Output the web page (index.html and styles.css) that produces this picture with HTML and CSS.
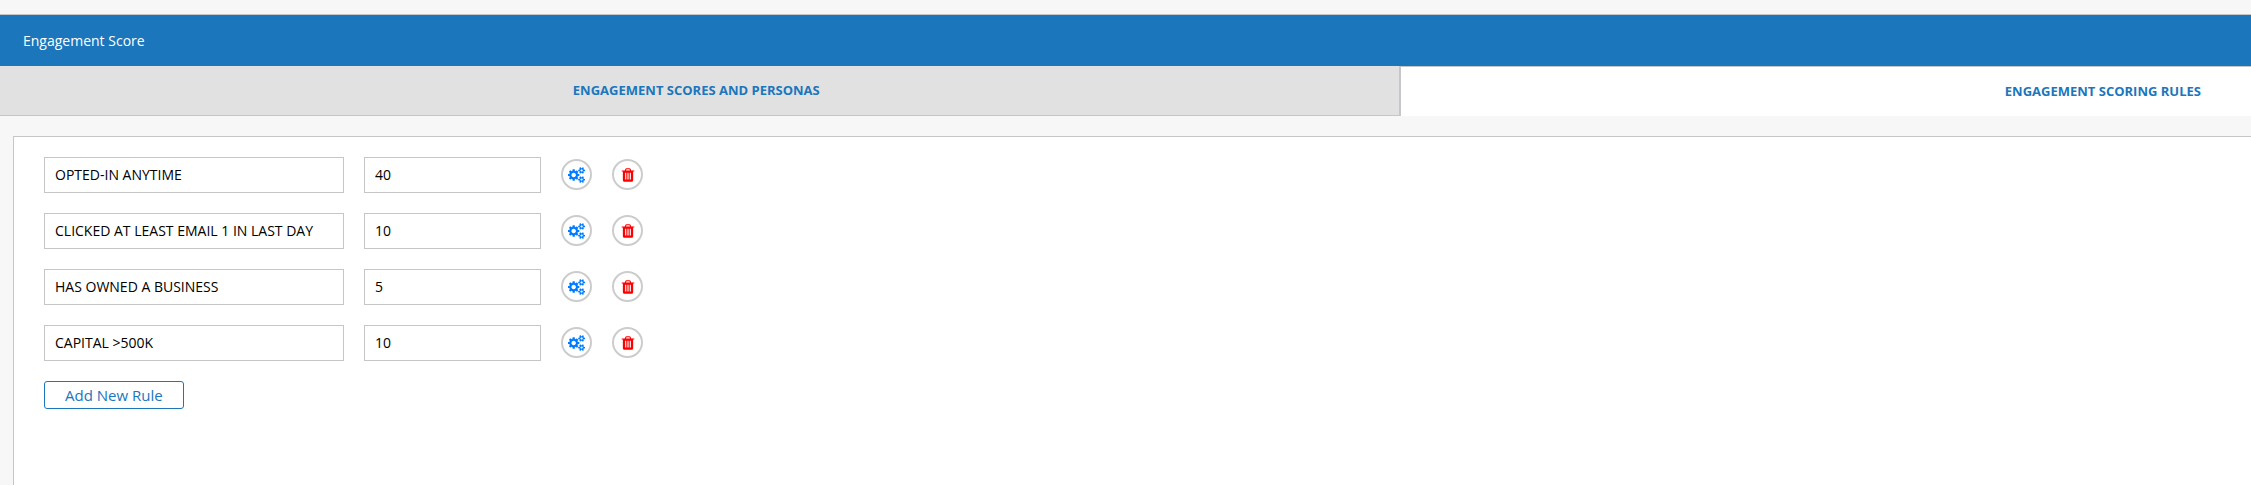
FILE: index.html
```
<!DOCTYPE html>
<html lang="en">
<head>
<meta charset="UTF-8">
<meta name="viewport" content="width=device-width, initial-scale=1.0">
<title>Engagement Score</title>
<link rel="stylesheet" href="styles.css">
</head>
<body>

<!-- Shared icons -->
<svg class="icon-defs" aria-hidden="true">
    <symbol id="icon-cogs" viewBox="0 0 1920 1792">
        <path d="M896 896q0-106-75-181t-181-75-181 75-75 181 75 181 181 75 181-75 75-181zm768 512q0-52-38-90t-90-38-90 38-38 90q0 53 37.500 90.500t90.500 37.500 90.500-37.500 37.500-90.500zm0-1024q0-52-38-90t-90-38-90 38-38 90q0 53 37.500 90.500t90.500 37.500 90.500-37.500 37.500-90.500zm-384 421v185q0 10-7 19.500t-16 10.500l-155 24q-11 35-32 76 34 48 90 115 7 11 7 20 0 12-7 19-23 30-82.500 89.500t-78.500 59.500q-11 0-21-7l-115-90q-37 19-77 31-11 108-23 155-7 24-30 24h-186q-11 0-20-7.500t-10-17.500l-23-153q-34-10-75-31l-118 89q-7 7-20 7-11 0-21-8-144-133-144-160 0-9 7-19 10-14 41-53t47-61q-23-44-35-82l-152-24q-10-1-17-9.500t-7-19.500v-185q0-10 7-19.500t16-10.500l155-24q11-35 32-76-34-48-90-115-7-11-7-20 0-12 7-20 22-30 82-89t79-59q11 0 21 7l115 90q34-18 77-32 11-108 23-154 7-24 30-24h186q11 0 20 7.500t10 17.500l23 153q34 10 75 31l118-89q8-7 20-7 11 0 21 8 144 133 144 160 0 8-7 19-12 16-42 54t-45 60q23 48 34 82l152 23q10 2 17 10.500t7 19.500zm640 533v140q0 16-149 31-12 27-30 52 51 113 51 138 0 4-4 7-122 71-124 71-8 0-46-47t-52-68q-20 2-30 2t-30-2q-14 21-52 68t-46 47q-2 0-124-71-4-3-4-7 0-25 51-138-18-25-30-52-149-15-149-31v-140q0-16 149-31 13-29 30-52-51-113-51-138 0-4 4-7 4-2 35-20t59-34 30-16q8 0 46 46.500t52 67.500q20-2 30-2t30 2q51-71 92-112l6-2q4 0 124 70 4 3 4 7 0 25-51 138 17 23 30 52 149 15 149 31zm0-1024v140q0 16-149 31-12 27-30 52 51 113 51 138 0 4-4 7-122 71-124 71-8 0-46-47t-52-68q-20 2-30 2t-30-2q-14 21-52 68t-46 47q-2 0-124-71-4-3-4-7 0-25 51-138-18-25-30-52-149-15-149-31v-140q0-16 149-31 13-29 30-52-51-113-51-138 0-4 4-7 4-2 35-20t59-34 30-16q8 0 46 46.500t52 67.500q20-2 30-2t30 2q51-71 92-112l6-2q4 0 124 70 4 3 4 7 0 25-51 138 17 23 30 52 149 15 149 31z"/>
    </symbol>
    <symbol id="icon-trash" viewBox="0 0 1792 1792">
        <path d="M704 1376v-704q0-14-9-23t-23-9h-64q-14 0-23 9t-9 23v704q0 14 9 23t23 9h64q14 0 23-9t9-23zm256 0v-704q0-14-9-23t-23-9h-64q-14 0-23 9t-9 23v704q0 14 9 23t23 9h64q14 0 23-9t9-23zm256 0v-704q0-14-9-23t-23-9h-64q-14 0-23 9t-9 23v704q0 14 9 23t23 9h64q14 0 23-9t9-23zm-544-992h448l-48-117q-7-9-17-11h-317q-10 2-17 11zm928 32v64q0 14-9 23t-23 9h-96v948q0 83-47 143.500t-113 60.500h-832q-66 0-113-58.500t-47-141.500v-952h-96q-14 0-23-9t-9-23v-64q0-14 9-23t23-9h309l70-167q15-37 54-63t79-26h320q40 0 79 26t54 63l70 167h309q14 0 23 9t9 23z"/>
    </symbol>
</svg>

<header class="page-header">
    <h1>Engagement Score</h1>
</header>

<nav class="tabs">
    <a class="tab" href="#personas">ENGAGEMENT SCORES AND PERSONAS</a>
    <a class="tab active" href="#rules" aria-current="page">ENGAGEMENT SCORING RULES</a>
</nav>

<main class="panel" id="rules">
    <form class="rules">
        <div class="rule">
            <input type="text" class="rule-name" aria-label="Rule name" value="OPTED-IN ANYTIME">
            <input type="text" class="rule-score" aria-label="Score" value="40">
            <button type="button" class="round-btn settings" aria-label="Edit rule"><svg class="icon cogs"><use href="#icon-cogs"/></svg></button>
            <button type="button" class="round-btn delete" aria-label="Delete rule"><svg class="icon"><use href="#icon-trash"/></svg></button>
        </div>
        <div class="rule">
            <input type="text" class="rule-name" aria-label="Rule name" value="CLICKED AT LEAST EMAIL 1 IN LAST DAY">
            <input type="text" class="rule-score" aria-label="Score" value="10">
            <button type="button" class="round-btn settings" aria-label="Edit rule"><svg class="icon cogs"><use href="#icon-cogs"/></svg></button>
            <button type="button" class="round-btn delete" aria-label="Delete rule"><svg class="icon"><use href="#icon-trash"/></svg></button>
        </div>
        <div class="rule">
            <input type="text" class="rule-name" aria-label="Rule name" value="HAS OWNED A BUSINESS">
            <input type="text" class="rule-score" aria-label="Score" value="5">
            <button type="button" class="round-btn settings" aria-label="Edit rule"><svg class="icon cogs"><use href="#icon-cogs"/></svg></button>
            <button type="button" class="round-btn delete" aria-label="Delete rule"><svg class="icon"><use href="#icon-trash"/></svg></button>
        </div>
        <div class="rule">
            <input type="text" class="rule-name" aria-label="Rule name" value="CAPITAL &gt;500K">
            <input type="text" class="rule-score" aria-label="Score" value="10">
            <button type="button" class="round-btn settings" aria-label="Edit rule"><svg class="icon cogs"><use href="#icon-cogs"/></svg></button>
            <button type="button" class="round-btn delete" aria-label="Delete rule"><svg class="icon"><use href="#icon-trash"/></svg></button>
        </div>
        <button type="button" class="add-btn">Add New Rule</button>
    </form>
</main>

</body>
</html>
```
FILE: styles.css
```
* {
  box-sizing: border-box;
}
body {
  margin: 0;
  padding-top: 14px;
  min-height: 100vh;
  display: flex;
  flex-direction: column;
  background-color: #f7f7f7;
  font-family: 'Open Sans', sans-serif;
  font-size: 14px;
  line-height: 20px;
  color: #000;
}
input,
button {
  font-family: inherit;
  font-size: 14px;
  line-height: 20px;
}
.icon-defs {
  display: none;
}

/* Header */
.page-header {
  padding: 16px 23px 15px;
  border-top: 1px solid #c6c6c8;
  background-color: #1b76bc;
}
.page-header h1 {
  margin: 0;
  font-size: 14px;
  font-weight: 400;
  color: #fff;
}

/* Tabs */
.tabs {
  display: grid;
  grid-template-columns: 28fr 17fr;
}
.tab {
  padding: 14px 6px 15px 0;
  border-right: 2px solid #c6c6cb;
  border-bottom: 1px solid #c6c6c8;
  background-color: #e1e1e1;
  color: #1b76bc;
  font-size: 13px;
  font-weight: 700;
  text-align: center;
  text-decoration: none;
}
.tab.active {
  padding-right: 50px;
  border-top: 1px solid #c6c6c8;
  border-right: none;
  border-bottom: none;
  background-color: #fff;
  text-align: right;
}

/* Rules */
.panel {
  flex: 1;
  margin: 20px 0 0 13px;
  padding: 20px 30px;
  border-top: 1px solid #c6c6c8;
  border-left: 1px solid #c6c6c8;
  background-color: #fff;
}
.rules {
  display: flex;
  flex-direction: column;
  align-items: flex-start;
  gap: 20px;
}
.rule {
  display: flex;
  align-items: flex-start;
  gap: 20px;
}
.rule-name,
.rule-score {
  height: 36px;
  padding: 0 10px 2px;
  border: 1px solid #c6c6c8;
  border-radius: 0;
  background-color: #fff;
  color: #000;
}
.rule-name {
  width: 300px;
}
.rule-score {
  width: 177px;
}
.round-btn {
  display: flex;
  align-items: center;
  justify-content: center;
  width: 31px;
  height: 31px;
  margin-top: 2px;
  padding: 0;
  border: 2px solid #ccc;
  border-radius: 50%;
  background-color: #fff;
  cursor: pointer;
}
.settings {
  color: #007bff;
}
.delete {
  color: #f00;
}
.icon {
  width: 16px;
  height: 16px;
  fill: currentColor;
}
.icon.cogs {
  width: 17px;
}
.add-btn {
  height: 28px;
  padding: 0 20px;
  border: 1px solid #1b76bc;
  border-radius: 3px;
  background-color: #fff;
  color: #1b76bc;
  font-size: 15px;
  cursor: pointer;
}
```
